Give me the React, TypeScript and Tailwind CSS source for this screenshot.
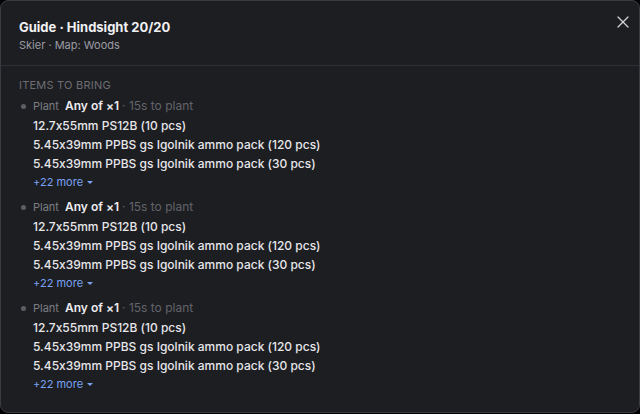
import { X } from 'lucide-react';

const groups = [0, 1, 2].map(() => ({
  kind: 'Plant',
  title: 'Any of ×1',
  note: '15s to plant',
  items: [
    '12.7x55mm PS12B (10 pcs)',
    '5.45x39mm PPBS gs Igolnik ammo pack (120 pcs)',
    '5.45x39mm PPBS gs Igolnik ammo pack (30 pcs)',
  ],
  more: 22,
}));

export default function App() {
  return (
    <div
      className="h-[414px] w-[640px] bg-black"
      style={{ fontFamily: 'Inter, "Noto Sans", sans-serif', fontFeatureSettings: '"calt" 0' }}
    >
      <div className="flex h-[413px] flex-col overflow-hidden rounded-lg border border-[#3a3b40] bg-[#1d1e22]">
        <div className="flex items-start justify-between border-b border-[#2f3035] pb-[12px] pl-[18px] pr-[6px] pt-[16px]">
          <div>
            <h2 className="text-[13px] font-bold leading-5 text-[#f1f1f3]">Guide · Hindsight 20/20</h2>
            <p className="text-[11px] leading-4 text-[#9b9ca2]">Skier · Map: Woods</p>
          </div>
          <button className="mt-[-5px] text-[#d4d4d8]">
            <X size={20} strokeWidth={1.5} />
          </button>
        </div>

        <div className="pl-[18px] pt-[11px]">
          <div className="text-[11px] uppercase leading-4 tracking-[0.02em] text-[#6c6d73]">Items to bring</div>
          <ul className="mt-[2px] flex flex-col gap-1">
            {groups.map((g, i) => (
              <li key={i} className="flex">
                <span className="ml-[2px] mr-[7px] mt-[9px] h-[5px] w-[5px] shrink-0 rounded-full bg-[#5d5e64]" />
                <div>
                  <div className="flex h-[21px] items-baseline overflow-hidden leading-[21px]">
                    <span className="text-[11px] text-[#7c7d83]">{g.kind}</span>
                    <span className="ml-[6px] text-[12px] font-semibold text-[#ececef]">{g.title}</span>
                    <span className="ml-[3px] text-[12px] text-[#63646a]">· {g.note}</span>
                  </div>
                  {g.items.map((it) => (
                    <div key={it} className="text-[12px] font-medium leading-[19px] text-[#e7e7ea]">
                      {it}
                    </div>
                  ))}
                  <button className="flex h-[19px] items-center text-[11px] leading-[19px] text-[#79a2f2]">
                    +{g.more} more
                    <span className="ml-[4px] h-0 w-0 border-l-[3px] border-r-[3px] border-t-[3px] border-l-transparent border-r-transparent border-t-[#79a2f2]" />
                  </button>
                </div>
              </li>
            ))}
          </ul>
        </div>
      </div>
    </div>
  );
}
